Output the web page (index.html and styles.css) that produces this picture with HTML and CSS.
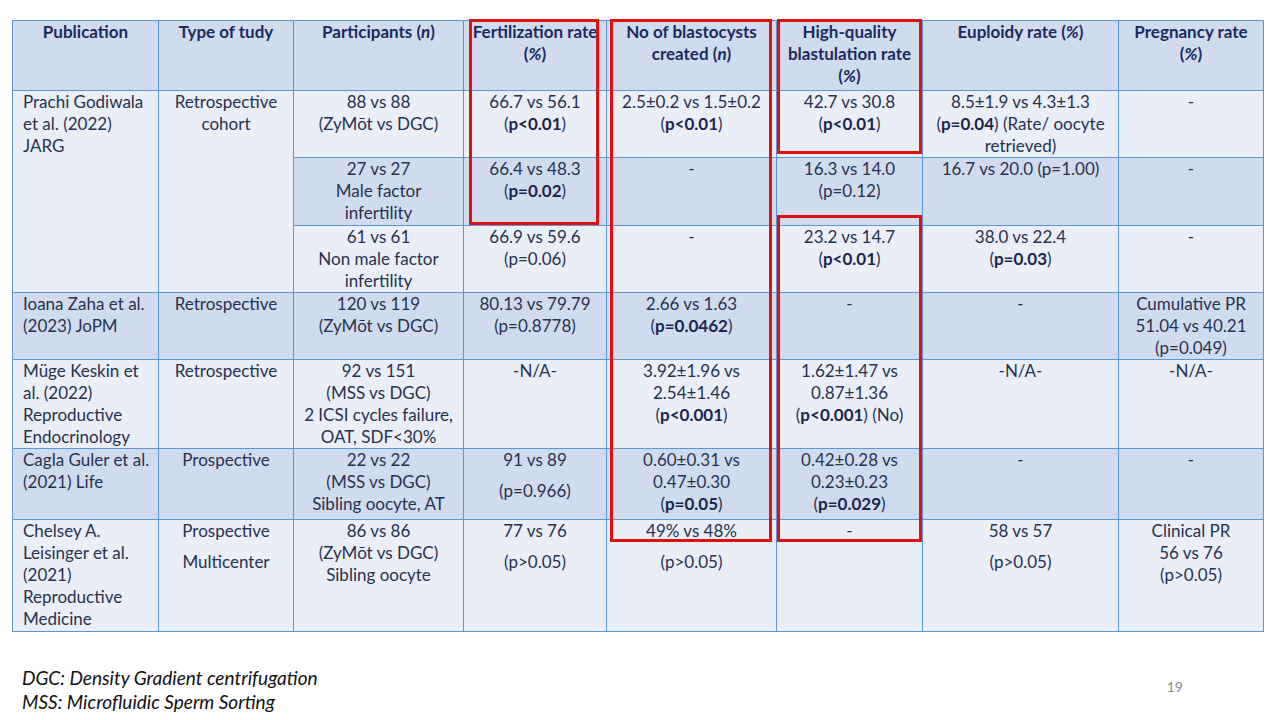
FILE: index.html
```html
<!DOCTYPE html>
<html>
<head>
<meta charset="utf-8">
<link rel="stylesheet" href="styles.css">
</head>
<body>
<div class="slide">
  <div class="table-wrap">
    <table class="data">
      <colgroup>
        <col class="c1"><col class="c2"><col class="c3"><col class="c4">
        <col class="c5"><col class="c6"><col class="c7"><col class="c8">
      </colgroup>
      <thead>
        <tr class="r-head">
          <th>Publication</th>
          <th>Type of tudy</th>
          <th>Participants (<i>n</i>)</th>
          <th>Fertilization rate<br>(<i>%</i>)</th>
          <th>No of blastocysts<br>created (<i>n</i>)</th>
          <th>High-quality<br>blastulation rate<br>(<i>%</i>)</th>
          <th>Euploidy rate (<i>%</i>)</th>
          <th>Pregnancy rate<br>(<i>%</i>)</th>
        </tr>
      </thead>
      <tbody>
        <tr class="light r1a">
          <td class="left" rowspan="3">Prachi Godiwala<br>et al. (2022)<br>JARG</td>
          <td rowspan="3">Retrospective<br>cohort</td>
          <td>88 vs 88<br>(ZyMōt vs DGC)</td>
          <td>66.7 vs 56.1<br>(<b>p&lt;0.01</b>)</td>
          <td>2.5±0.2 vs 1.5±0.2<br>(<b>p&lt;0.01</b>)</td>
          <td>42.7 vs 30.8<br>(<b>p&lt;0.01</b>)</td>
          <td>8.5±1.9 vs 4.3±1.3<br>(<b>p=0.04</b>) (Rate/ oocyte<br>retrieved)</td>
          <td>-</td>
        </tr>
        <tr class="dark r1b">
          <td>27 vs 27<br>Male factor<br>infertility</td>
          <td>66.4 vs 48.3<br>(<b>p=0.02</b>)</td>
          <td>-</td>
          <td>16.3 vs 14.0<br>(p=0.12)</td>
          <td>16.7 vs 20.0 (p=1.00)</td>
          <td>-</td>
        </tr>
        <tr class="light r1c">
          <td>61 vs 61<br>Non male factor<br>infertility</td>
          <td>66.9 vs 59.6<br>(p=0.06)</td>
          <td>-</td>
          <td>23.2 vs 14.7<br>(<b>p&lt;0.01</b>)</td>
          <td>38.0 vs 22.4<br>(<b>p=0.03</b>)</td>
          <td>-</td>
        </tr>
        <tr class="dark r2">
          <td class="left">Ioana Zaha et al.<br>(2023) JoPM</td>
          <td>Retrospective</td>
          <td>120 vs 119<br>(ZyMōt vs DGC)</td>
          <td>80.13 vs 79.79<br>(p=0.8778)</td>
          <td>2.66 vs 1.63<br>(<b>p=0.0462</b>)</td>
          <td>-</td>
          <td>-</td>
          <td>Cumulative PR<br>51.04 vs 40.21<br>(p=0.049)</td>
        </tr>
        <tr class="light r3">
          <td class="left">Müge Keskin et<br>al. (2022)<br>Reproductive<br>Endocrinology</td>
          <td>Retrospective</td>
          <td>92 vs 151<br>(MSS vs DGC)<br>2 ICSI cycles failure,<br>OAT, SDF&lt;30%</td>
          <td>-N/A-</td>
          <td>3.92±1.96 vs<br>2.54±1.46<br>(<b>p&lt;0.001</b>)</td>
          <td>1.62±1.47 vs<br>0.87±1.36<br>(<b>p&lt;0.001</b>) (No)</td>
          <td>-N/A-</td>
          <td>-N/A-</td>
        </tr>
        <tr class="dark r4">
          <td class="left">Cagla Guler et al.<br>(2021) Life</td>
          <td>Prospective</td>
          <td>22 vs 22<br>(MSS vs DGC)<br>Sibling oocyte, AT</td>
          <td><p>91 vs 89</p><p class="gap">(p=0.966)</p></td>
          <td>0.60±0.31 vs<br>0.47±0.30<br>(<b>p=0.05</b>)</td>
          <td>0.42±0.28 vs<br>0.23±0.23<br>(<b>p=0.029</b>)</td>
          <td>-</td>
          <td>-</td>
        </tr>
        <tr class="light r5">
          <td class="left">Chelsey A.<br>Leisinger et al.<br>(2021)<br>Reproductive<br>Medicine</td>
          <td><p>Prospective</p><p class="gap">Multicenter</p></td>
          <td>86 vs 86<br>(ZyMōt vs DGC)<br>Sibling oocyte</td>
          <td><p>77 vs 76</p><p class="gap">(p&gt;0.05)</p></td>
          <td><p>49% vs 48%</p><p class="gap">(p&gt;0.05)</p></td>
          <td>-</td>
          <td><p>58 vs 57</p><p class="gap">(p&gt;0.05)</p></td>
          <td>Clinical PR<br>56 vs 76<br>(p&gt;0.05)</td>
        </tr>
      </tbody>
    </table>
    <div class="hl hl-fert"></div>
    <div class="hl hl-blast"></div>
    <div class="hl hl-hq1"></div>
    <div class="hl hl-hq2"></div>
  </div>
  <div class="footer">
    <div class="notes">
      <p>DGC: Density Gradient centrifugation</p>
      <p>MSS: Microfluidic Sperm Sorting</p>
    </div>
    <div class="page-num">19</div>
  </div>
</div>
</body>
</html>
```
FILE: styles.css
```css
html, body {
  margin: 0;
  padding: 0;
  background: #ffffff;
}
.slide {
  width: 1280px;
  height: 720px;
  padding: 20px 0 0 12px;
  box-sizing: border-box;
  font-family: Lato, "Open Sans", sans-serif;
  color: #1f2b52;
  overflow: hidden;
}
.table-wrap {
  position: relative;
  width: 1251px;
}
.data {
  border-collapse: collapse;
  table-layout: fixed;
  width: 1251px;
  font-size: 17px;
  line-height: 22px;
}
.c1 { width: 146px; }
.c2 { width: 135px; }
.c3 { width: 170px; }
.c4 { width: 143px; }
.c5 { width: 170px; }
.c6 { width: 146px; }
.c7 { width: 196px; }
.c8 { width: 145px; }

.data th, .data td {
  border: 1px solid #5a97d6;
  padding: 0 1px;
  text-align: center;
  vertical-align: top;
  white-space: nowrap;
  overflow: visible;
}
.data th {
  font-weight: bold;
  color: #1b2a5e;
  background: #d0dcee;
}
.data td {
  color: #27324f;
}
.data td b {
  color: #1b2650;
}
.data td.left {
  text-align: left;
  padding-left: 10px;
}
.data p {
  margin: 0;
}
.data p.gap {
  margin-top: 9px;
}
.light td { background: #e9eef7; }
.dark td { background: #d0dcee; }

.r-head { height: 70px; }
.r1a { height: 67px; }
.r1b { height: 68px; }
.r1c { height: 67px; }
.r2 { height: 67px; }
.r3 { height: 89px; }
.r4 { height: 71px; }
.r5 { height: 112px; }

.hl {
  position: absolute;
  border: 3px solid #e10f0f;
  box-sizing: border-box;
}
.hl-fert { left: 457px; top: -1px; width: 130px; height: 206px; }
.hl-blast { left: 598px; top: -1px; width: 162px; height: 523px; }
.hl-hq1 { left: 765px; top: -1px; width: 145px; height: 135px; }
.hl-hq2 { left: 765px; top: 195px; width: 145px; height: 327px; }

.footer {
  display: flex;
  justify-content: space-between;
  align-items: flex-start;
  margin-top: 34px;
}
.notes {
  padding-left: 10px;
  font-family: Lato, "Open Sans", sans-serif;
  font-style: italic;
  font-size: 19px;
  line-height: 24px;
  color: #111111;
}
.notes p { margin: 0; }
.page-num {
  margin-right: 97px;
  margin-top: 12px;
  font-size: 14px;
  color: #8a8a8a;
}
```
